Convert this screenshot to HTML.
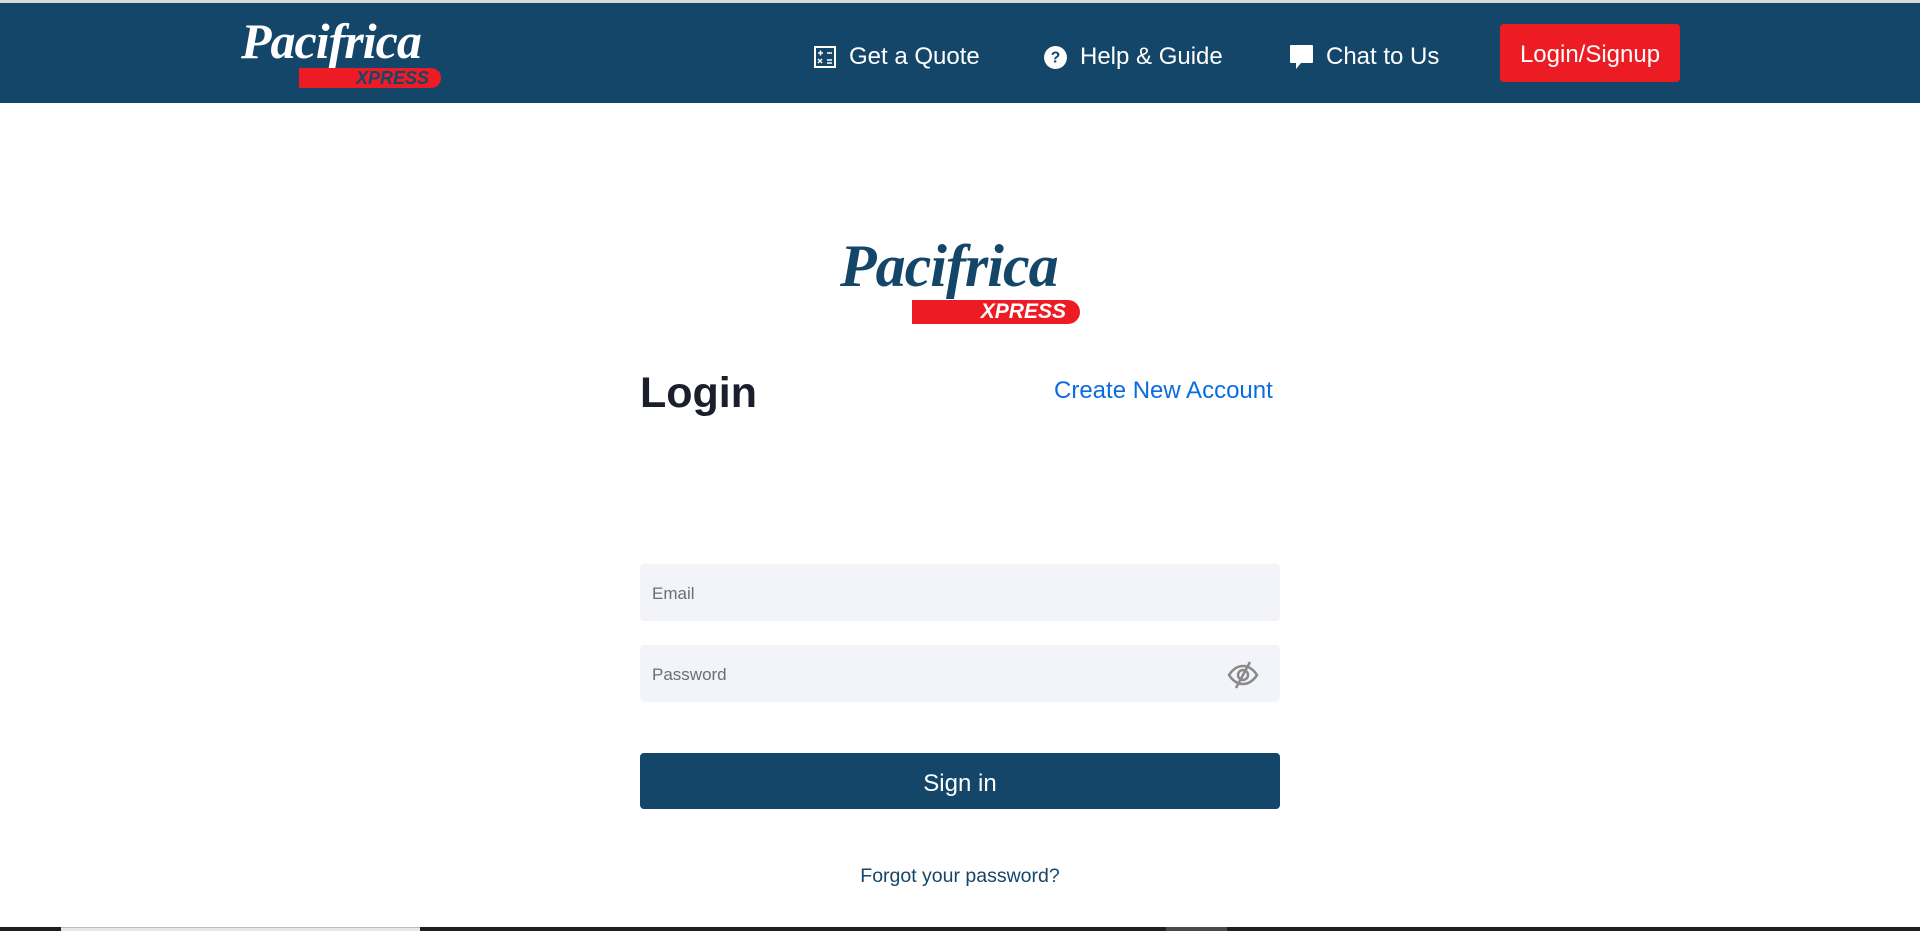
<!DOCTYPE html>
<html><head><meta charset="utf-8"><style>
*{box-sizing:border-box;margin:0;padding:0}
body{width:1920px;height:931px;overflow:hidden;background:#fff;font-family:"Liberation Sans",sans-serif;position:relative}
.top{position:absolute;left:0;top:0;width:1920px;height:3px;background:#d9d9d9}
.hdr{position:absolute;left:0;top:3px;width:1920px;height:100px;background:#14466a}
.nav{position:absolute;top:42px;color:#fff;font-size:24px;display:flex;align-items:center;gap:12px;line-height:30px}
.btn{position:absolute;left:1500px;top:24px;width:180px;height:58px;background:#ed1c24;border-radius:4px;color:#fff;font-size:24px;text-align:center;line-height:62px}
.logo{position:absolute}
.script{font-family:"Liberation Serif",serif;font-style:italic;font-weight:bold;letter-spacing:-1px;white-space:nowrap}
.pill{position:absolute;background:#ed1c24;border-radius:0 20px 20px 0;font-style:italic;font-weight:bold;color:#14466a;text-align:right;white-space:nowrap}
h1{position:absolute;left:640px;top:369px;font-size:43px;font-weight:bold;color:#1b1e2b}
.create{position:absolute;left:1054px;top:377px;font-size:24px;color:#0a6ce0}
.inp{position:absolute;left:640px;width:640px;height:57px;background:#f3f4f9;border-radius:4px;font-size:17px;color:#6b6e78;padding-left:12px;line-height:59px}
.sign{position:absolute;left:640px;top:753px;width:640px;height:56px;background:#14466a;border-radius:4px;color:#fff;font-size:24px;text-align:center;line-height:61px}
.forgot{position:absolute;left:0;width:1920px;top:865px;text-align:center;font-size:19.5px;color:#14466a}
.bot{position:absolute;left:0;top:927px;width:1920px;height:4px;background:#1f1f1f}
</style></head><body>
<div class="top"></div>
<div class="hdr"></div>
<div class="logo" style="left:239px;top:12px;width:205px;height:78px">
 <div class="script" style="position:absolute;left:2px;top:0;font-size:50px;color:#fff">Pacifrica</div>
 <div class="pill" style="left:60px;top:56px;width:142px;height:20px;font-size:18px;line-height:20px;padding-right:12px">XPRESS</div>
</div>
<div class="nav" style="left:813px"><svg width="24" height="24" viewBox="0 0 24 24" fill="none" stroke="#fff" stroke-width="2"><rect x="2" y="2" width="20" height="20"/><path d="M5 8h5M7.5 5.5v5M14 8h5M5 14l4 4M9 14l-4 4M14 15h5M14 18h5" stroke-width="1.5"/></svg><span>Get a Quote</span></div>
<div class="nav" style="left:1043px"><svg width="25" height="25" viewBox="0 0 24 24"><circle cx="12" cy="12" r="11" fill="#fff"/><text x="12" y="17" text-anchor="middle" font-size="15" font-weight="bold" fill="#14466a" font-family="Liberation Sans">?</text></svg><span>Help &amp; Guide</span></div>
<div class="nav" style="left:1289px"><svg width="25" height="27" viewBox="0 0 25 27"><path d="M2 1h21a1 1 0 0 1 1 1v16a1 1 0 0 1-1 1H12l-5 6v-6H2a1 1 0 0 1-1-1V2a1 1 0 0 1 1-1z" fill="#fff"/></svg><span>Chat to Us</span></div>
<div class="btn">Login/Signup</div>
<div class="logo" style="left:838px;top:232px;width:245px;height:95px">
 <div class="script" style="position:absolute;left:2px;top:0;font-size:60px;color:#14466a">Pacifrica</div>
 <div class="pill" style="left:74px;top:68px;width:168px;height:24px;font-size:21px;line-height:24px;padding-right:14px;color:#fff">XPRESS</div>
</div>
<h1>Login</h1>
<div class="create">Create New Account</div>
<div class="inp" style="top:564px">Email</div>
<div class="inp" style="top:645px">Password</div>
<svg style="position:absolute;left:1227px;top:660px" width="32" height="30" viewBox="0 0 32 30" fill="none" stroke="#8a8a8a" stroke-width="2.5"><path d="M2 15c4-6 9-9 14-9s10 3 14 9c-4 6-9 9-14 9S6 21 2 15z"/><circle cx="16" cy="15" r="5"/><path d="M23 2L9 28"/></svg>
<div class="sign">Sign in</div>
<div class="forgot">Forgot your password?</div>
<div class="bot"></div>
<div style="position:absolute;left:61px;top:927px;width:359px;height:4px;background:#e8e8e8;border-top:1px solid #bbb"></div>
<div style="position:absolute;left:1166px;top:927px;width:61px;height:4px;background:#4a4a4a"></div>
</body></html>
